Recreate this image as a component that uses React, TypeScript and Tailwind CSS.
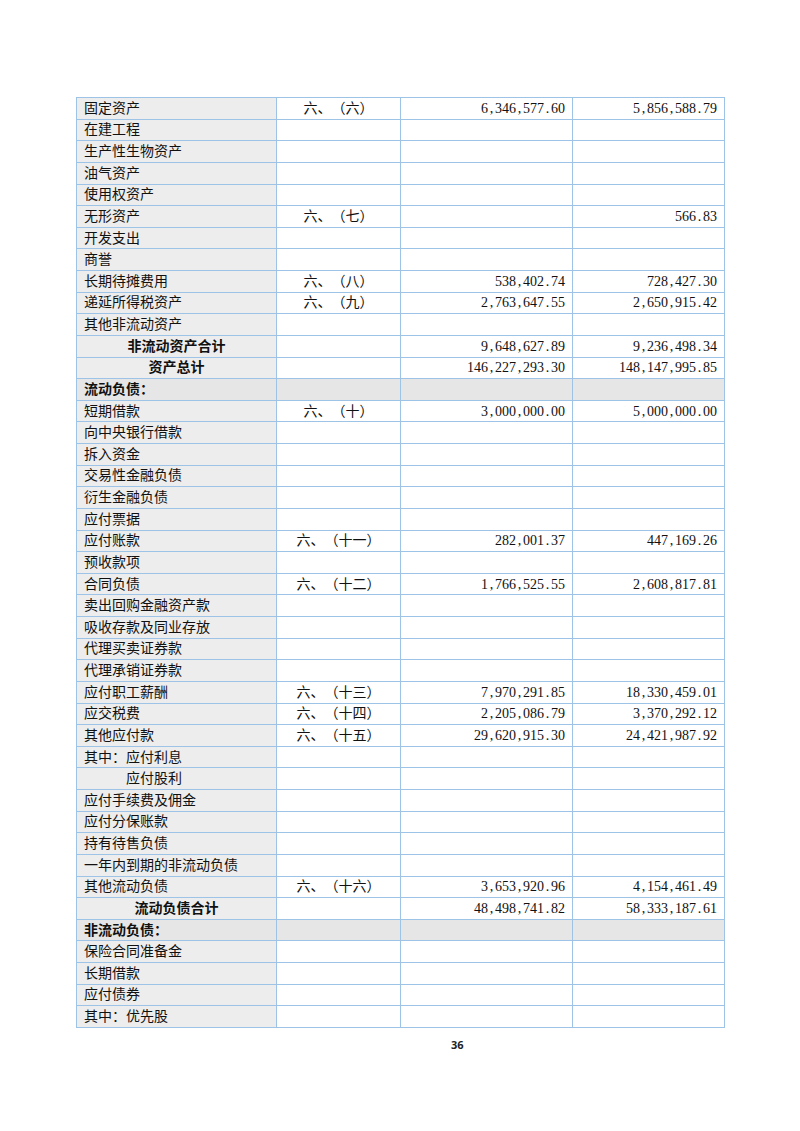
import React from 'react';

type RowKind = 'item' | 'total' | 'section' | 'sub';

interface Row {
  label: string;
  note?: string;
  current?: string;
  previous?: string;
  kind?: RowKind;
}

const rows: Row[] = [
  { label: '固定资产', note: '六、（六）', current: '6,346,577.60', previous: '5,856,588.79' },
  { label: '在建工程' },
  { label: '生产性生物资产' },
  { label: '油气资产' },
  { label: '使用权资产' },
  { label: '无形资产', note: '六、（七）', previous: '566.83' },
  { label: '开发支出' },
  { label: '商誉' },
  { label: '长期待摊费用', note: '六、（八）', current: '538,402.74', previous: '728,427.30' },
  { label: '递延所得税资产', note: '六、（九）', current: '2,763,647.55', previous: '2,650,915.42' },
  { label: '其他非流动资产' },
  { label: '非流动资产合计', current: '9,648,627.89', previous: '9,236,498.34', kind: 'total' },
  { label: '资产总计', current: '146,227,293.30', previous: '148,147,995.85', kind: 'total' },
  { label: '流动负债：', kind: 'section' },
  { label: '短期借款', note: '六、（十）', current: '3,000,000.00', previous: '5,000,000.00' },
  { label: '向中央银行借款' },
  { label: '拆入资金' },
  { label: '交易性金融负债' },
  { label: '衍生金融负债' },
  { label: '应付票据' },
  { label: '应付账款', note: '六、（十一）', current: '282,001.37', previous: '447,169.26' },
  { label: '预收款项' },
  { label: '合同负债', note: '六、（十二）', current: '1,766,525.55', previous: '2,608,817.81' },
  { label: '卖出回购金融资产款' },
  { label: '吸收存款及同业存放' },
  { label: '代理买卖证券款' },
  { label: '代理承销证券款' },
  { label: '应付职工薪酬', note: '六、（十三）', current: '7,970,291.85', previous: '18,330,459.01' },
  { label: '应交税费', note: '六、（十四）', current: '2,205,086.79', previous: '3,370,292.12' },
  { label: '其他应付款', note: '六、（十五）', current: '29,620,915.30', previous: '24,421,987.92' },
  { label: '其中：应付利息' },
  { label: '应付股利', kind: 'sub' },
  { label: '应付手续费及佣金' },
  { label: '应付分保账款' },
  { label: '持有待售负债' },
  { label: '一年内到期的非流动负债' },
  { label: '其他流动负债', note: '六、（十六）', current: '3,653,920.96', previous: '4,154,461.49' },
  { label: '流动负债合计', current: '48,498,741.82', previous: '58,333,187.61', kind: 'total' },
  { label: '非流动负债：', kind: 'section' },
  { label: '保险合同准备金' },
  { label: '长期借款' },
  { label: '应付债券' },
  { label: '其中：优先股' },
];

// fixed-pitch digits, like the half-width glyphs of the source document
function Amount({ value }: { value?: string }) {
  if (!value) return null;
  return (
    <span className="inline-flex">
      {value.split('').map((ch, i) => (
        <span key={i} className="inline-block w-[7px] text-center">
          {ch}
        </span>
      ))}
    </span>
  );
}

const cell = 'border border-[#9dc3e6] h-[21.63px] p-0 align-middle';

export default function App() {
  return (
    <div
      className="w-[800px] h-[1131px] bg-white pt-[97px] pl-[76px] text-[#111] [text-spacing-trim:space-all]"
      style={{ fontFamily: '"Noto Sans CJK SC", "Liberation Sans", sans-serif' }}
    >
      <table className="w-[648px] border-collapse table-fixed text-[14px] leading-[19px]">
        <colgroup>
          <col className="w-[200px]" />
          <col className="w-[124px]" />
          <col className="w-[172px]" />
          <col className="w-[152px]" />
        </colgroup>
        <tbody>
          {rows.map((r, idx) => {
            const section = r.kind === 'section';
            const total = r.kind === 'total';
            const rest = section ? 'bg-[#e6e6e6]' : 'bg-white';
            return (
              <tr key={idx}>
                <td
                  className={`${cell} ${section ? 'bg-[#e6e6e6]' : 'bg-[#ededed]'} ${
                    total ? 'text-center font-bold' : section ? 'pl-[7px] font-bold' : r.kind === 'sub' ? 'pl-[49px]' : 'pl-[7px]'
                  }`}
                >
                  <span className="relative -top-px">{r.label}</span>
                </td>
                <td className={`${cell} ${rest} text-center`}>
                  <span className="relative -top-px">{r.note}</span>
                </td>
                <td
                  className={`${cell} ${rest} pr-[7px] text-right`}
                  style={{ fontFamily: '"Liberation Serif", serif' }}
                >
                  <Amount value={r.current} />
                </td>
                <td
                  className={`${cell} ${rest} pr-[7px] text-right`}
                  style={{ fontFamily: '"Liberation Serif", serif' }}
                >
                  <Amount value={r.previous} />
                </td>
              </tr>
            );
          })}
        </tbody>
      </table>
      <div
        className="mt-[9px] ml-[375px] text-[11px] font-bold text-[#222]"
        style={{ fontFamily: '"Open Sans", "Liberation Sans", sans-serif' }}
      >
        36
      </div>
    </div>
  );
}
